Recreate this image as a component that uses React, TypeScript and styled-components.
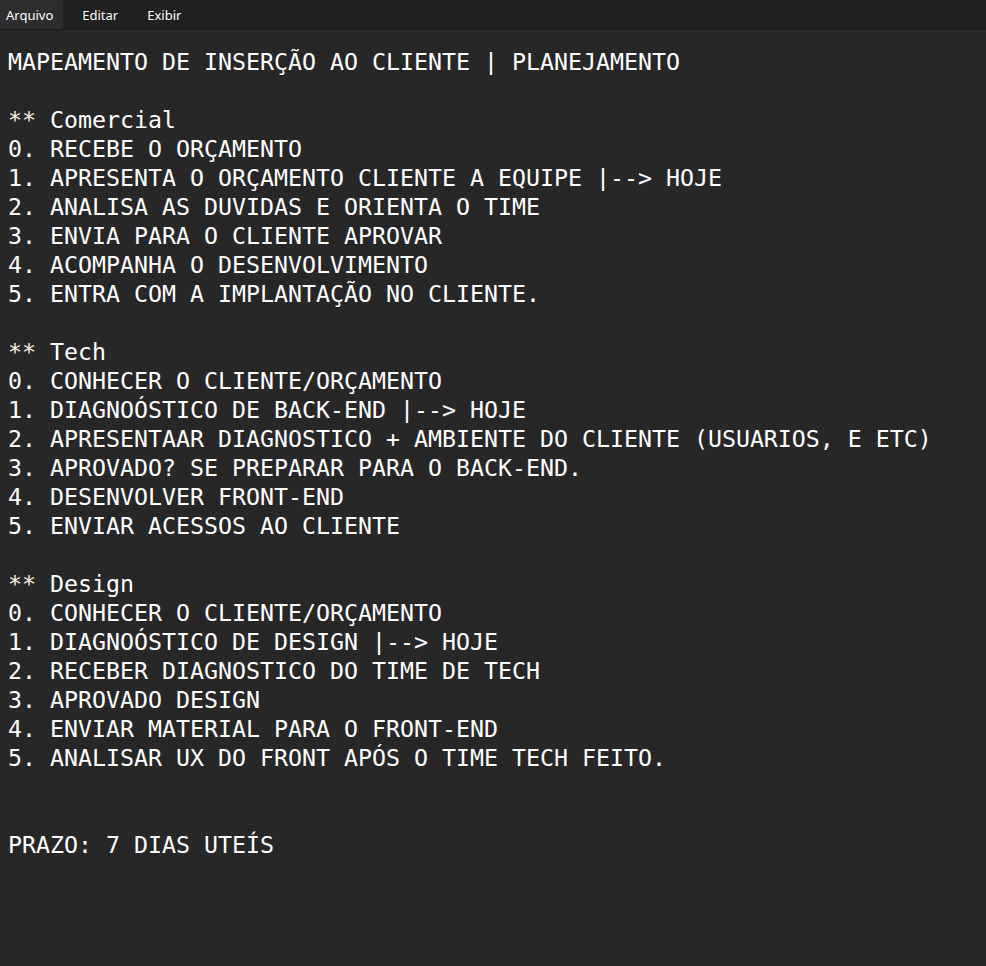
import React from "react";
import styled, { createGlobalStyle } from "styled-components";

const GlobalStyle = createGlobalStyle`
  html, body {
    margin: 0;
    padding: 0;
    background: #272727;
  }
  #root {
    min-height: 100vh;
  }
`;

const Window = styled.div`
  display: flex;
  flex-direction: column;
  width: 986px;
  height: 966px;
  background: #272727;
  overflow: hidden;
`;

const MenuBar = styled.nav`
  display: flex;
  align-items: stretch;
  gap: 9px;
  height: 31px;
  background: #202020;
  flex-shrink: 0;
`;

const MenuItem = styled.div<{ $active?: boolean }>`
  display: flex;
  align-items: center;
  height: 29px;
  padding: 0 10px;
  border-radius: 0 0 4px 0;
  background: ${(p) => (p.$active ? "#2d2d2d" : "transparent")};
  color: #ffffff;
  font-family: "Noto Sans", "Open Sans", sans-serif;
  font-size: 13px;
  &:first-child {
    padding-left: 6px;
  }
`;

const Editor = styled.pre`
  flex: 1;
  margin: 0;
  padding: 16px 0 0 8px;
  color: #ffffff;
  font-family: "DejaVu Sans Mono", "Liberation Mono", monospace;
  font-size: 23.25px;
  line-height: 29px;
  white-space: pre;
`;

const Marker = styled.span`
  color: #fbf6e4;
`;

const lines: string[] = [
  "MAPEAMENTO DE INSERÇÃO AO CLIENTE | PLANEJAMENTO",
  "",
  "** Comercial",
  "0. RECEBE O ORÇAMENTO",
  "1. APRESENTA O ORÇAMENTO CLIENTE A EQUIPE |--> HOJE",
  "2. ANALISA AS DUVIDAS E ORIENTA O TIME",
  "3. ENVIA PARA O CLIENTE APROVAR",
  "4. ACOMPANHA O DESENVOLVIMENTO",
  "5. ENTRA COM A IMPLANTAÇÃO NO CLIENTE.",
  "",
  "** Tech",
  "0. CONHECER O CLIENTE/ORÇAMENTO",
  "1. DIAGNOÓSTICO DE BACK-END |--> HOJE",
  "2. APRESENTAAR DIAGNOSTICO + AMBIENTE DO CLIENTE (USUARIOS, E ETC)",
  "3. APROVADO? SE PREPARAR PARA O BACK-END.",
  "4. DESENVOLVER FRONT-END",
  "5. ENVIAR ACESSOS AO CLIENTE",
  "",
  "** Design",
  "0. CONHECER O CLIENTE/ORÇAMENTO",
  "1. DIAGNOÓSTICO DE DESIGN |--> HOJE",
  "2. RECEBER DIAGNOSTICO DO TIME DE TECH",
  "3. APROVADO DESIGN",
  "4. ENVIAR MATERIAL PARA O FRONT-END",
  "5. ANALISAR UX DO FRONT APÓS O TIME TECH FEITO.",
  "",
  "",
  "PRAZO: 7 DIAS UTEÍS",
];

const renderLine = (line: string, i: number) => {
  if (line.startsWith("** ")) {
    return (
      <React.Fragment key={i}>
        <Marker>**</Marker>
        {line.slice(2)}
        {"\n"}
      </React.Fragment>
    );
  }
  return <React.Fragment key={i}>{line + "\n"}</React.Fragment>;
};

export default function App() {
  return (
    <>
      <GlobalStyle />
      <Window>
        <MenuBar>
          <MenuItem $active>Arquivo</MenuItem>
          <MenuItem>Editar</MenuItem>
          <MenuItem>Exibir</MenuItem>
        </MenuBar>
        <Editor>{lines.map(renderLine)}</Editor>
      </Window>
    </>
  );
}
